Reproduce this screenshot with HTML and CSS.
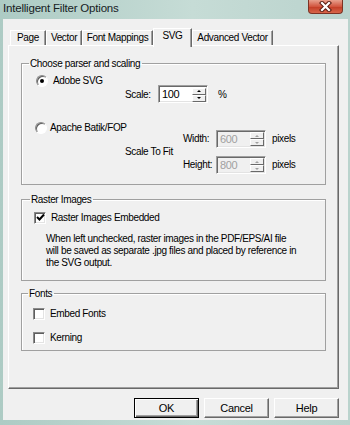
FILE: index.html
```html
<!DOCTYPE html>
<html lang="en">
<head>
    <meta charset="UTF-8">
    <title>Intelligent Filter Options</title>
    <link rel="stylesheet" href="styles.css">
</head>
<body>
<div class="window">
    <div class="titlebar">
        <span class="title">Intelligent Filter Options</span>
        <span class="close">
            <svg width="13" height="11" viewBox="0 0 13 11">
                <path d="M3 2 L10 9 M10 2 L3 9" stroke="#5a1d12" stroke-width="4.2" stroke-linecap="square"/>
                <path d="M3 2 L10 9 M10 2 L3 9" stroke="#fff" stroke-width="2.2" stroke-linecap="square"/>
            </svg>
        </span>
    </div>
    <div class="client">
        <div class="tabs">
            <div class="tab tab-page">Page</div>
            <div class="tab tab-vector">Vector</div>
            <div class="tab tab-fonts">Font Mappings</div>
            <div class="tab tab-svg active">SVG</div>
            <div class="tab tab-adv">Advanced Vector</div>
        </div>
        <div class="panel">
            <fieldset class="group group-parser">
                <legend>Choose parser and scaling</legend>
                <div class="option option-adobe">
                    <span class="radio on"></span>
                    <span>Adobe SVG</span>
                </div>
                <div class="scale-row">
                    <span class="field-label">Scale:</span>
                    <div class="spin">
                        <span class="spin-value">100</span>
                        <span class="spin-btns"><span class="spin-btn up"></span><span class="spin-btn down"></span></span>
                    </div>
                    <span class="unit">%</span>
                </div>
                <div class="option option-batik">
                    <span class="radio"></span>
                    <span>Apache Batik/FOP</span>
                </div>
                <div class="fit-grid">
                    <span class="fit-label">Scale To Fit</span>
                    <span class="dim-label">Width:</span>
                    <div class="spin disabled">
                        <span class="spin-value">600</span>
                        <span class="spin-btns"><span class="spin-btn up"></span><span class="spin-btn down"></span></span>
                    </div>
                    <span class="unit">pixels</span>
                    <span class="dim-label">Height:</span>
                    <div class="spin disabled">
                        <span class="spin-value">800</span>
                        <span class="spin-btns"><span class="spin-btn up"></span><span class="spin-btn down"></span></span>
                    </div>
                    <span class="unit">pixels</span>
                </div>
            </fieldset>

            <fieldset class="group group-raster">
                <legend>Raster Images</legend>
                <div class="option option-raster">
                    <span class="check on">
                        <svg width="9" height="9" viewBox="0 0 9 9"><path d="M1 4 L3.5 6.5 L8 1.5" stroke="#000" stroke-width="2" fill="none"/></svg>
                    </span>
                    <span>Raster Images Embedded</span>
                </div>
                <p class="note">When left unchecked, raster images in the PDF/EPS/AI file<br>will be saved as separate .jpg files and placed by reference in<br>the SVG output.</p>
            </fieldset>

            <fieldset class="group group-fonts">
                <legend>Fonts</legend>
                <div class="option option-embed">
                    <span class="check"></span>
                    <span>Embed Fonts</span>
                </div>
                <div class="option option-kerning">
                    <span class="check"></span>
                    <span>Kerning</span>
                </div>
            </fieldset>
        </div>
        <div class="buttons">
            <button class="btn default">OK</button>
            <button class="btn">Cancel</button>
            <button class="btn">Help</button>
        </div>
    </div>
</div>
</body>
</html>
```

FILE: styles.css
```css
body {
    margin: 0;
    font-family: "Liberation Sans", Arial, sans-serif;
    font-size: 10px;
    letter-spacing: -0.35px;
    color: #000;
}

.window {
    width: 350px;
    height: 425px;
    box-sizing: border-box;
    padding: 0 2px 5px 3px;
    display: flex;
    flex-direction: column;
    background: linear-gradient(to right, #adcbc4, #c6dcd6 55%, #bad3cd);
}

.titlebar {
    height: 19px;
    flex: none;
    display: flex;
    justify-content: space-between;
    align-items: flex-start;
}

.title {
    font-size: 11.5px;
    letter-spacing: -0.2px;
    line-height: 16px;
    color: #16211f;
}

.close {
    width: 35px;
    height: 14px;
    margin-right: 5px;
    box-sizing: border-box;
    border: 1px solid #7c3324;
    border-top: none;
    border-radius: 0 0 4px 4px;
    background: linear-gradient(#e8a08d, #d2563f 50%, #c23b24 51%, #d7664a);
    display: flex;
    justify-content: center;
    align-items: center;
}

.client {
    flex: 1;
    background: #f0f0f0;
    padding: 9px 9px 0 5px;
    display: flex;
    flex-direction: column;
}

/* tab strip */
.tabs {
    display: flex;
    height: 17px;
    padding-left: 2px;
}

.tab {
    height: 15px;
    margin-top: 2px;
    box-sizing: border-box;
    border-left: 1px solid #fff;
    border-top: 1px solid #fff;
    border-right: 1px solid #696969;
    box-shadow: inset -1px 0 #a0a0a0;
    line-height: 14px;
    text-align: center;
    white-space: nowrap;
    background: #f0f0f0;
}

.tab-page { width: 36px; }
.tab-vector { width: 36px; }
.tab-fonts { width: 71px; }
.tab-svg { width: 39px; }
.tab-adv { width: 81px; }

.tab.active {
    height: 19px;
    margin-top: 0;
    margin-bottom: -2px;
    line-height: 14px;
    position: relative;
    z-index: 1;
}

.panel {
    height: 344px;
    box-sizing: border-box;
    border-top: 1px solid #fff;
    border-left: 1px solid #fff;
    border-right: 1px solid #696969;
    border-bottom: 1px solid #696969;
    box-shadow: inset -1px -1px #a0a0a0;
    padding: 11px 12px 0 12px;
}

/* group boxes */
.group {
    margin: 0;
    padding: 0 0 0 12px;
    border: 1px solid #a0a0a0;
    box-shadow: inset 1px 1px #fff;
    min-width: 0;
}

.group legend {
    padding: 0 2px 0 1px;
    margin-left: -6px;
    line-height: 13px;
}

.group-parser legend { margin-left: -5px; }
.group-raster legend { margin-left: -4px; }

.group-parser { padding-bottom: 10px; }
.group-raster { margin-top: 8px; padding-bottom: 11px; }
.group-fonts { margin-top: 6px; padding-bottom: 6px; }

.option {
    display: flex;
    align-items: center;
    height: 13px;
    gap: 5px;
    white-space: nowrap;
}

.option-adobe { margin-top: 4px; margin-left: 2px; }
.option-batik { margin-top: 18px; margin-left: 1px; gap: 3px; }
.option-raster { margin-top: 5px; gap: 5px; }
.option-embed { margin-top: 7px; gap: 5px; margin-left: -1px; }
.option-kerning { margin-top: 11px; gap: 5px; margin-left: -1px; }

.radio {
    width: 12px;
    height: 12px;
    box-sizing: border-box;
    border-radius: 50%;
    border: 1px solid #8a8a8a;
    border-right-color: #fff;
    border-bottom-color: #fff;
    box-shadow: inset 1px 1px #5e5e5e;
    background: #fff;
    display: flex;
    justify-content: center;
    align-items: center;
}

.radio.on::after {
    content: "";
    width: 4px;
    height: 4px;
    border-radius: 50%;
    background: #000;
}

.check {
    width: 12px;
    height: 12px;
    box-sizing: border-box;
    border: 1px solid #8a8a8a;
    border-right-color: #fff;
    border-bottom-color: #fff;
    box-shadow: inset 1px 1px #5e5e5e, inset -1px -1px #e3e3e3;
    background: #fff;
    display: flex;
    justify-content: center;
    align-items: center;
}

/* spin boxes */
.scale-row {
    display: flex;
    align-items: center;
    height: 18px;
    margin-top: -2px;
    padding-left: 91px;
}

.scale-row .field-label { width: 33px; flex: none; }
.scale-row .unit { margin-left: 10px; }

.spin {
    width: 50px;
    height: 18px;
    flex: none;
    box-sizing: border-box;
    border: 1px solid #a0a0a0;
    border-right-color: #fff;
    border-bottom-color: #fff;
    box-shadow: inset 1px 1px #696969, inset -1px -1px #e3e3e3;
    background: #fff;
    display: flex;
    align-items: center;
    justify-content: space-between;
    padding: 2px 1px 1px 3px;
    font-size: 11px;
}

.spin-value {
    line-height: 13px;
}

.spin.disabled {
    background: #f0f0f0;
    color: #a0a0a0;
}

.spin-btns {
    display: flex;
    flex-direction: column;
    width: 14px;
    height: 14px;
}

.spin-btn {
    flex: 1;
    box-sizing: border-box;
    background: #f0f0f0;
    border: 1px solid #fff;
    border-right-color: #696969;
    border-bottom-color: #696969;
    display: flex;
    justify-content: center;
    align-items: center;
}

.spin-btn::after {
    content: "";
    border-left: 2px solid transparent;
    border-right: 2px solid transparent;
}

.spin-btn.up::after { border-bottom: 2px solid #000; }
.spin-btn.down::after { border-top: 2px solid #000; }

.spin.disabled .spin-btn.up::after { border-bottom-color: #a0a0a0; }
.spin.disabled .spin-btn.down::after { border-top-color: #a0a0a0; }

.fit-grid {
    display: grid;
    grid-template-columns: 58px 33px 50px auto;
    grid-template-rows: 19px 19px;
    row-gap: 7px;
    align-items: center;
    margin-top: -5px;
    padding-left: 91px;
    white-space: nowrap;
}

.fit-label {
    grid-row: 1 / 3;
}

.fit-grid .unit { margin-left: 6px; }

.note {
    margin: 9px 0 0 12px;
    line-height: 12px;
    white-space: nowrap;
}

/* dialog buttons */
.buttons {
    display: flex;
    justify-content: flex-end;
    gap: 5px;
    margin-top: 9px;
}

.btn {
    width: 65px;
    height: 20px;
    font-family: inherit;
    font-size: 11px;
    letter-spacing: -0.3px;
    color: #000;
    background: #f0f0f0;
    border: 1px solid #fff;
    border-right-color: #696969;
    border-bottom-color: #696969;
    box-shadow: inset -1px -1px #a0a0a0;
    padding: 0;
}

.btn.default {
    border: 1px solid #000;
    box-shadow: inset 1px 1px #fff, inset -1px -1px #696969, inset -2px -2px #a0a0a0;
}
```
